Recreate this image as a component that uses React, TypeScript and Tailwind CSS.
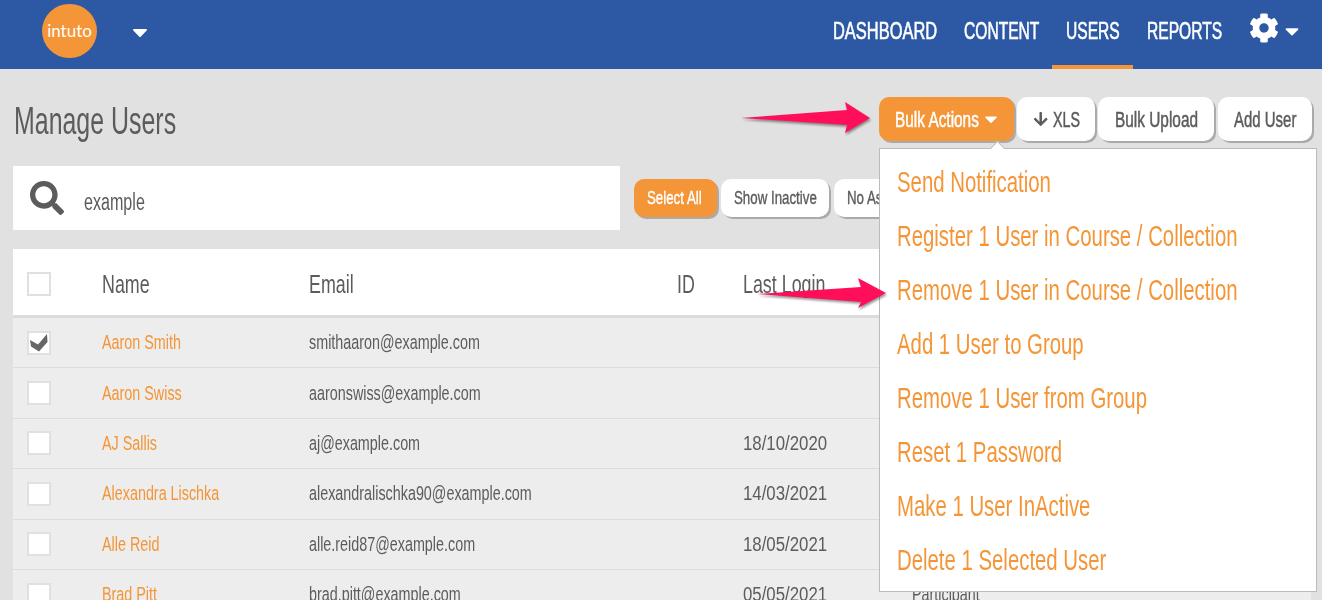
import { FaArrowDown, FaCaretDown, FaCog, FaSearch } from "react-icons/fa";

const users = [
  { name: "Aaron Smith", email: "smithaaron@example.com", login: "", role: "", checked: true },
  { name: "Aaron Swiss", email: "aaronswiss@example.com", login: "", role: "" },
  { name: "AJ Sallis", email: "aj@example.com", login: "18/10/2020", role: "" },
  { name: "Alexandra Lischka", email: "alexandralischka90@example.com", login: "14/03/2021", role: "" },
  { name: "Alle Reid", email: "alle.reid87@example.com", login: "18/05/2021", role: "" },
  { name: "Brad Pitt", email: "brad.pitt@example.com", login: "05/05/2021", role: "Participant" },
];

const menuItems = [
  "Send Notification",
  "Register 1 User in Course / Collection",
  "Remove 1 User in Course / Collection",
  "Add 1 User to Group",
  "Remove 1 User from Group",
  "Reset 1 Password",
  "Make 1 User InActive",
  "Delete 1 Selected User",
];

const navItems = [
  { label: "DASHBOARD", width: "w-[131px]", scale: "scale-x-[0.685]" },
  { label: "CONTENT", width: "w-[102px]", scale: "scale-x-[0.65]" },
  { label: "USERS", width: "w-[81px]", scale: "scale-x-[0.65]", active: true },
  { label: "REPORTS", width: "w-[103px]", scale: "scale-x-[0.65]" },
];

// the original font is very condensed, so the text gets squeezed sideways
function Narrow({ children, scale = "scale-x-[0.7]" }: { children: React.ReactNode; scale?: string }) {
  return <span className={`inline-block origin-left whitespace-nowrap ${scale}`}>{children}</span>;
}

function Check({ checked }: { checked?: boolean }) {
  return (
    <div className="flex h-6 w-6 items-center justify-center border-2 border-[#e0e0e0] bg-white">
      {checked && (
        <svg width="20" height="20" viewBox="0 0 20 20">
          <path d="M1 7 L9 11.5 L18 1 L18.5 9 L10 18.5 L2 13.5 Z" fill="#666" />
        </svg>
      )}
    </div>
  );
}

export default function App() {
  return (
    <div className="relative h-[600px] w-[1322px] overflow-hidden bg-[#e1e1e1] font-['Liberation_Sans',sans-serif] text-[#5c5c5c]">
      <header className="flex h-[69px] items-center bg-[#2d59a4] text-white">
        <div className="ml-[42px] flex h-[54px] w-[55px] -translate-y-[4px] items-center justify-center rounded-full bg-[#f49537] font-['Lato',sans-serif] text-[17px]">
          intuto
        </div>
        <FaCaretDown className="ml-[31px] -translate-y-[3px] text-[24px]" />
        <nav className="ml-auto flex h-full text-[24px] [-webkit-text-stroke:0.6px]">
          {navItems.map((item) => (
            <div
              key={item.label}
              className={`flex ${item.width} items-start pt-[13px] pl-[14px] ${item.active ? "border-b-4 border-[#f49537]" : ""}`}
            >
              <Narrow scale={item.scale}>{item.label}</Narrow>
            </div>
          ))}
        </nav>
        <div className="mr-[19px] ml-[13px] flex items-center">
          <FaCog className="-translate-y-[7px] text-[30px]" />
          <FaCaretDown className="ml-[2px] -translate-y-[4px] text-[22px]" />
        </div>
      </header>

      <div className="flex items-start pt-[28px] pr-[10px] pl-[14px]">
        <h1 className="mt-[2px] text-[38px] leading-[44px]">
          <Narrow scale="scale-x-[0.656]">Manage Users</Narrow>
        </h1>
        <div className="relative ml-auto flex gap-[3px] text-[22px] [-webkit-text-stroke:0.5px]">
          <div className="flex h-[44px] w-[135px] items-center rounded-[10px] bg-[#f49537] pl-[16px] text-white shadow-[2px_2px_0_#aaa]">
            <Narrow>Bulk Actions</Narrow>
            <FaCaretDown className="-ml-[34px] text-[20px]" />
          </div>
          <div className="flex h-[44px] w-[78px] items-center rounded-[10px] bg-white pl-[16px] shadow-[2px_2px_0_#aaa]">
            <FaArrowDown className="mr-[5px] text-[16px]" />
            <Narrow scale="scale-x-[0.65]">XLS</Narrow>
          </div>
          <div className="flex h-[44px] w-[116px] items-center rounded-[10px] bg-white pl-[17px] shadow-[2px_2px_0_#aaa]">
            <Narrow>Bulk Upload</Narrow>
          </div>
          <div className="ml-[1px] flex h-[44px] w-[94px] items-center rounded-[10px] bg-white pl-[16px] shadow-[2px_2px_0_#aaa]">
            <Narrow scale="scale-x-[0.68]">Add User</Narrow>
          </div>
        </div>
      </div>

      <div className="mt-[23px] flex pl-[13px]">
        <div className="flex h-[64px] w-[607px] items-center bg-white pl-[17px] text-[23px]">
          <FaSearch className="text-[34px]" />
          <span className="ml-[20px] pt-[9px]">
            <Narrow>example</Narrow>
          </span>
        </div>
        <div className="mt-[13px] ml-[14px] flex gap-[4px] text-[19px] [-webkit-text-stroke:0.4px]">
          <div className="flex h-[38px] w-[83px] items-center rounded-[10px] bg-[#f49537] pl-[13px] text-white shadow-[2px_2px_0_#aaa]">
            <Narrow>Select All</Narrow>
          </div>
          <div className="flex h-[38px] w-[108px] items-center rounded-[10px] bg-white pl-[13px] shadow-[2px_2px_0_#aaa]">
            <Narrow>Show Inactive</Narrow>
          </div>
          <div className="ml-[1px] flex h-[38px] w-[120px] items-center rounded-[10px] bg-white pl-[13px] shadow-[2px_2px_0_#aaa]">
            <Narrow>No As</Narrow>
          </div>
        </div>
      </div>

      <div className="mt-[19px] mr-[11px] ml-[13px]">
        <div className="grid h-[69px] grid-cols-[75px_207px_368px_66px_1fr] items-center border-b-[3px] border-[#dcdcdc] bg-white pt-[4px] pl-[14px] text-[25.5px]">
          <Check />
          <Narrow>Name</Narrow>
          <Narrow>Email</Narrow>
          <Narrow>ID</Narrow>
          <Narrow>Last Login</Narrow>
        </div>
        {users.map((user) => (
          <div
            key={user.email}
            className="grid h-[50.4px] grid-cols-[75px_207px_368px_66px_169px_1fr] items-center border-b border-[#dcdcdc] bg-[#ededed] pl-[14px] text-[20.5px]"
          >
            <Check checked={user.checked} />
            <span className="text-[#f49537]">
              <Narrow>{user.name}</Narrow>
            </span>
            <Narrow>{user.email}</Narrow>
            <span />
            <Narrow scale="scale-x-[0.82]">{user.login}</Narrow>
            <Narrow>{user.role}</Narrow>
          </div>
        ))}
      </div>

      {/* bulk actions menu */}
      <div className="absolute top-[148px] left-[879px] h-[444px] w-[438px] border border-[#bbb] bg-white pt-[6px] text-[29.5px] text-[#f49537]">
        <div className="absolute -top-[6px] left-[112px] h-[11px] w-[11px] rotate-45 border-t border-l border-[#bbb] bg-white" />
        {menuItems.map((item) => (
          <div key={item} className="flex h-[54px] items-center pl-[17px]">
            <Narrow scale="scale-x-[0.69]">{item}</Narrow>
          </div>
        ))}
      </div>

      <svg className="absolute top-[95px] left-[735px] drop-shadow-[1px_2px_1px_rgba(0,0,0,0.4)]" width="140" height="45" viewBox="0 0 140 45">
        <path d="M6 23 L112 15 L110 7 L135 23 L110 38 L112 30 Z" fill="#ff0f5a" />
      </svg>
      <svg className="absolute top-[272px] left-[752px] drop-shadow-[1px_2px_1px_rgba(0,0,0,0.4)]" width="140" height="45" viewBox="0 0 140 45">
        <path d="M5 22 L109 15 L106 6 L134 21 L106 36 L109 30 Z" fill="#ff0f5a" />
      </svg>
    </div>
  );
}
